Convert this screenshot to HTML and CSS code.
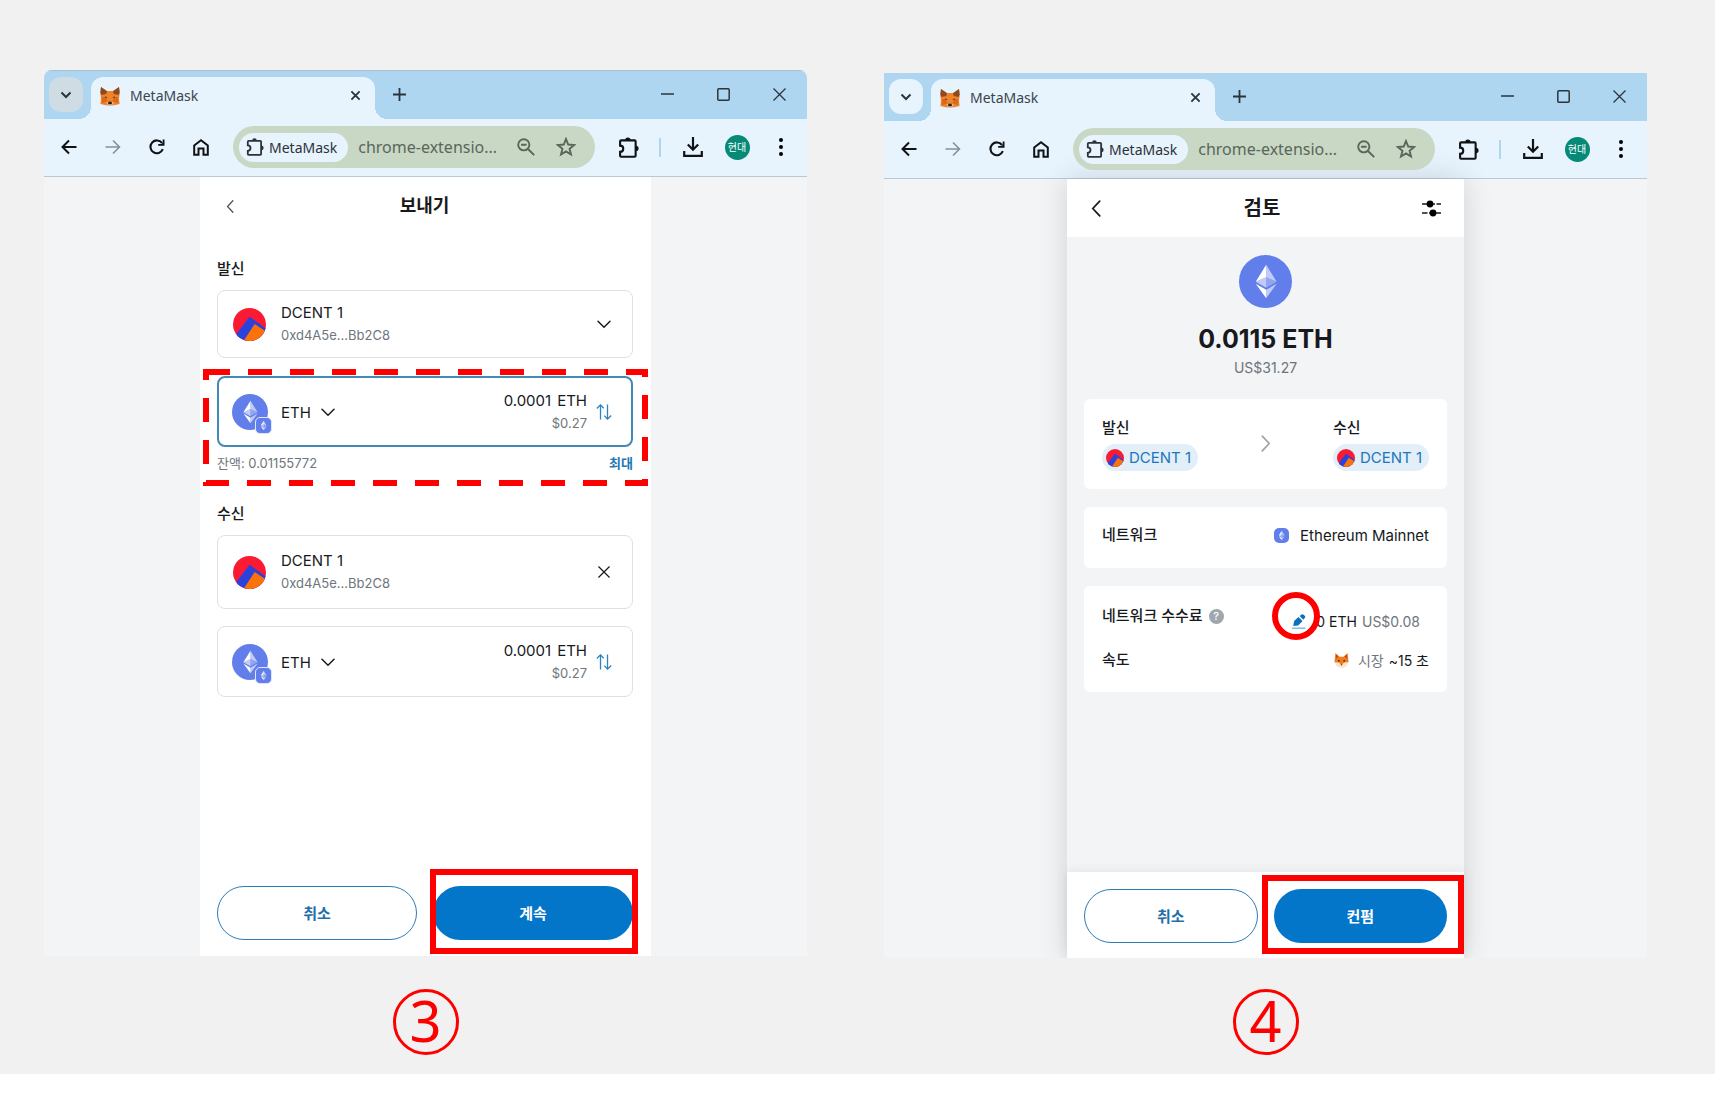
FILE: index.html
```html
<!DOCTYPE html>
<html lang="ko">
<head>
<meta charset="utf-8">
<meta name="viewport" content="width=device-width, initial-scale=1">
<title>MetaMask</title>
<link rel="stylesheet" href="styles.css">
</head>
<body>
<svg class="sprite" aria-hidden="true">
  <symbol id="fox" viewBox="0 0 20 20">
    <path fill="#f0832a" d="M1 1l6 4h6l6-4 .8 6-.8 5.500.6 5.500-5.400 1.200L10.800 19.500H9.200L5.800 19.200.4 18l.6-5.500L.2 7z"/>
    <path fill="#8a4a24" d="M1 1l6 4.200L6.200 8 1.600 9 .4 6.500zM19 1l-6 4.200.8 2.800 4.600 1 1.200-2.500z"/>
    <path fill="#d96a1c" d="M2 11l4 .3 1.500 4L2 17.200zM18 11l-4 .3-1.500 4 5.500 1.900z"/>
    <path fill="#5b3a2c" d="M5 10.300l2.800 1.300-2.500.5zM15 10.300l-2.800 1.300 2.500.5z"/>
    <path fill="#d8c9bd" d="M6.500 16l2 .5h3l2-.5-1.500 3.300H8z"/>
    <path fill="#2a2320" d="M8.400 15.800h3.200l.4 2.400H8z"/>
  </symbol>
  <symbol id="foxface" viewBox="0 0 16 16">
    <path fill="#f47c20" d="M1.500 0L6 4h4L14.500 0l1 9.500L8 15.500.5 9.500z"/>
    <path fill="#a34b1d" d="M2.200 1.500l2.300 2.300L2.400 6zM13.800 1.500l-2.300 2.300L13.600 6z"/>
    <path fill="#fbe3c8" d="M.4 9.800l4.600.3L8 12.500l3-2.400 4.600-.3-2.600 4.500L8 16l-5-1.700z"/>
    <path fill="#3a2a22" d="M4.300 7.500h1.600V9H4.300zM10.100 7.500h1.600V9h-1.600zM7 12h2l-1 1.500z"/>
  </symbol>
  <symbol id="down" viewBox="0 0 12 12"><path d="M1.500 3.500L6 8l4.500-4.500" fill="none" stroke="currentColor" stroke-width="2"/></symbol>
  <symbol id="x" viewBox="0 0 12 12"><path d="M1.500 1.500l9 9M10.500 1.500l-9 9" fill="none" stroke="currentColor" stroke-width="2"/></symbol>
  <symbol id="thinx" viewBox="0 0 13 13"><path d="M.5.5l12 12M12.500.5l-12 12" fill="none" stroke="currentColor" stroke-width="1.300"/></symbol>
  <symbol id="plus" viewBox="0 0 13 13"><path d="M6.500 0v13M0 6.500h13" fill="none" stroke="currentColor" stroke-width="1.800"/></symbol>
  <symbol id="min" viewBox="0 0 13 13"><path d="M0 6h13" fill="none" stroke="currentColor" stroke-width="1.500"/></symbol>
  <symbol id="max" viewBox="0 0 13 13"><rect x=".8" y=".8" width="11.400" height="11.400" rx="1" fill="none" stroke="currentColor" stroke-width="1.500"/></symbol>
  <symbol id="back" viewBox="0 0 16 16"><path d="M15.500 8H2M8 1.500L1.500 8 8 14.500" fill="none" stroke="currentColor" stroke-width="2"/></symbol>
  <symbol id="forward" viewBox="0 0 16 16"><path d="M.5 8H14M8 1.500L14.500 8 8 14.500" fill="none" stroke="currentColor" stroke-width="1.600"/></symbol>
  <symbol id="reload" viewBox="0 0 16 16"><path d="M13.800 10.200A6.400 6.400 0 1 1 13 4" fill="none" stroke="currentColor" stroke-width="2.100"/><path d="M15.500.5v6.300H9.200V5h3.500l1-1.500v-3z" fill="currentColor"/></symbol>
  <symbol id="home" viewBox="0 0 16 17"><path d="M1.200 6.500L8 1.300l6.800 5.200v9.300h-4.300V9.500h-5v6.300H1.200z" fill="none" stroke="currentColor" stroke-width="2"/></symbol>
  <symbol id="puzzle" viewBox="0 0 20 20"><path d="M2 4.200q0-1 1-1h12.800q1 0 1 1v13.600q0 1-1 1H3q-1 0-1-1v-3.600c4 0 4-6 0-6z" fill="none" stroke="currentColor" stroke-width="2"/><path d="M6.800 3a2.600 2.600 0 0 1 5.200 0zM17 8.400a2.600 2.600 0 0 1 0 5.200z" fill="currentColor"/></symbol>
  <symbol id="zoomout" viewBox="0 0 18 18"><circle cx="6.800" cy="6.800" r="5.600" fill="none" stroke="currentColor" stroke-width="1.900"/><path d="M11 11l6.200 6.200M4 6.800h5.600" fill="none" stroke="currentColor" stroke-width="1.900"/></symbol>
  <symbol id="star" viewBox="0 0 18 18"><path d="M9 1.800l2 5 5.300.4-4.100 3.400 1.300 5.200L9 13l-4.500 2.800 1.300-5.200L1.700 7.200 7 6.800z" fill="none" stroke="currentColor" stroke-width="1.700"/></symbol>
  <symbol id="download" viewBox="0 0 20 20"><path d="M10 0v12M4.800 7.500L10 12.700l5.200-5.200M1.200 14v4.800h17.600V14" fill="none" stroke="currentColor" stroke-width="2.200"/></symbol>
  <symbol id="dots" viewBox="0 0 4 18"><circle cx="2" cy="2" r="2"/><circle cx="2" cy="9" r="2"/><circle cx="2" cy="16" r="2"/></symbol>
  <symbol id="chevl" viewBox="0 0 9 16"><path d="M8 1L1.500 8 8 15" fill="none" stroke="currentColor" stroke-width="1.600" stroke-linecap="round"/></symbol>
  <symbol id="chevr" viewBox="0 0 9 16"><path d="M1 1l6.500 7L1 15" fill="none" stroke="currentColor" stroke-width="1.600" stroke-linecap="round"/></symbol>
  <symbol id="chevd" viewBox="0 0 14 9"><path d="M1 1.200l6 6 6-6" fill="none" stroke="currentColor" stroke-width="1.500" stroke-linecap="round"/></symbol>
  <symbol id="swap" viewBox="0 0 16 16"><path d="M4.500 15.500V1M.8 4.500L4.500.9l3.200 3.400M11.500.5V15M8.300 11.600l3.200 3.500 3.700-3.600" fill="none" stroke="currentColor" stroke-width="1.300"/></symbol>
  <symbol id="tune" viewBox="0 0 19 17"><path d="M0 4h13M14.500 4H19M0 13h5.500M7 13h12" stroke="currentColor" stroke-width="1.300"/><circle cx="8" cy="4" r="3.400"/><circle cx="11" cy="13" r="3.400"/></symbol>
  <symbol id="pencil" viewBox="0 0 14 15"><path fill="currentColor" d="M1.300 12l.8-5L6.500 3l4 4-4.300 4.500zM7.700 2l1.800-1.400q1.200-.8 2.200.2l1 1q1 1.200 0 2.200L11.300 5.800z"/><path d="M0 14.200h13.500" stroke="#6cb1df" stroke-width="1.300"/></symbol>
  <symbol id="jazz" viewBox="0 0 32 32">
    <clipPath id="disc"><circle cx="16" cy="16" r="16"/></clipPath>
    <g clip-path="url(#disc)"><path fill="#fb1a33" d="M0 0h32v32H0z"/><path fill="#2a41dc" d="M16 8.500L3 25.500V34h20l10-9v-4.500z"/><path fill="#fa7209" d="M21 15.500L9.500 33H33v-9.500z"/></g>
  </symbol>
  <symbol id="diamond" viewBox="-3 -3 38 38">
    <g fill="#fff"><path fill-opacity=".6" d="M16.500 4v8.870l7.500 3.350z"/><path d="M16.500 4L9 16.220l7.500-3.350z"/><path fill-opacity=".6" d="M16.500 21.970V28L24 17.620z"/><path d="M16.500 28v-6.030L9 17.620z"/><path fill-opacity=".3" d="M16.500 20.570l7.500-4.350-7.500-3.350z"/><path fill-opacity=".6" d="M9 16.220l7.500 4.350v-7.700z"/></g>
  </symbol>
</svg>

<main class="stage">
  <figure class="step">
    <section class="window window-send">
      <div class="tabstrip">
        <button class="tabsearch" aria-label="탭 검색"><svg width="12" height="12"><use href="#down"/></svg></button>
        <div class="tab">
          <svg width="20" height="20"><use href="#fox"/></svg>
          <span class="tabname">MetaMask</span>
          <button class="tabclose" aria-label="탭 닫기"><svg width="11" height="11"><use href="#x"/></svg></button>
        </div>
        <button class="newtab" aria-label="새 탭"><svg width="13" height="13"><use href="#plus"/></svg></button>
        <div class="controls">
          <button aria-label="최소화"><svg width="13" height="13"><use href="#min"/></svg></button>
          <button aria-label="최대화"><svg width="13" height="13"><use href="#max"/></svg></button>
          <button aria-label="닫기"><svg width="13" height="13"><use href="#thinx"/></svg></button>
        </div>
      </div>
      <div class="toolbar">
        <button class="tool" aria-label="뒤로"><svg width="16" height="16"><use href="#back"/></svg></button>
        <button class="tool dim" aria-label="앞으로"><svg width="16" height="16"><use href="#forward"/></svg></button>
        <button class="tool" aria-label="새로고침"><svg width="16" height="16"><use href="#reload"/></svg></button>
        <button class="tool" aria-label="홈"><svg width="16" height="17"><use href="#home"/></svg></button>
        <div class="omnibox">
          <button class="chip"><svg width="18" height="18"><use href="#puzzle"/></svg>MetaMask</button>
          <input class="url" type="text" aria-label="주소" value="chrome-extensio...">
          <button aria-label="축소"><svg width="18" height="18"><use href="#zoomout"/></svg></button>
          <button aria-label="북마크"><svg width="20" height="20"><use href="#star"/></svg></button>
        </div>
        <button class="tool" aria-label="확장 프로그램"><svg width="21" height="21"><use href="#puzzle"/></svg></button>
        <span class="divider"></span>
        <button class="tool" aria-label="다운로드"><svg width="20" height="20"><use href="#download"/></svg></button>
        <button class="tool" aria-label="프로필"><span class="profile">현대</span></button>
        <button class="tool" aria-label="메뉴"><svg width="4" height="18"><use href="#dots"/></svg></button>
      </div>
      <div class="viewport">
        <div class="wallet send">
          <header class="head">
            <button class="headbtn grey" aria-label="뒤로"><svg width="8" height="13"><use href="#chevl"/></svg></button>
            <h1>보내기</h1>
            <span class="headbtn"></span>
          </header>
          <div class="form">
            <h2>발신</h2>
            <button class="field account">
              <svg width="33" height="33"><use href="#jazz"/></svg>
              <span class="lines"><span class="name">DCENT 1</span><span class="sub">0xd4A5e...Bb2C8</span></span>
              <svg class="end" width="14" height="9"><use href="#chevd"/></svg>
            </button>
            <div class="marked">
              <div class="field token active">
                <span class="coin"><svg width="36" height="36"><use href="#diamond"/></svg><span class="coinbadge"><svg width="15" height="15"><use href="#diamond"/></svg></span></span>
                <button class="pick">ETH<svg width="14" height="9"><use href="#chevd"/></svg></button>
                <span class="lines amount"><label class="name"><input type="text" aria-label="보내는 금액" value="0.0001"> ETH</label><span class="sub">$0.27</span></span>
                <button class="end swap" aria-label="단위 전환"><svg width="16" height="16"><use href="#swap"/></svg></button>
              </div>
              <div class="balance"><span>잔액: 0.01155772</span><button>최대</button></div>
              <svg class="dashes" aria-hidden="true"><rect class="dashrect"/></svg>
            </div>
            <h2>수신</h2>
            <div class="field account tall">
              <svg width="33" height="33"><use href="#jazz"/></svg>
              <span class="lines"><span class="name">DCENT 1</span><span class="sub">0xd4A5e...Bb2C8</span></span>
              <button class="end" aria-label="지우기"><svg width="12" height="12"><use href="#thinx"/></svg></button>
            </div>
            <div class="field token">
              <span class="coin"><svg width="36" height="36"><use href="#diamond"/></svg><span class="coinbadge"><svg width="15" height="15"><use href="#diamond"/></svg></span></span>
              <button class="pick">ETH<svg width="14" height="9"><use href="#chevd"/></svg></button>
              <span class="lines amount"><label class="name"><input type="text" aria-label="받는 금액" value="0.0001"> ETH</label><span class="sub">$0.27</span></span>
              <button class="end swap" aria-label="단위 전환"><svg width="16" height="16"><use href="#swap"/></svg></button>
            </div>
          </div>
          <footer class="actions">
            <button class="btn outline">취소</button>
            <div class="framed"><button class="btn solid">계속</button></div>
          </footer>
        </div>
      </div>
    </section>
    <figcaption>3</figcaption>
  </figure>

  <figure class="step">
    <section class="window window-review">
      <div class="tabstrip">
        <button class="tabsearch" aria-label="탭 검색"><svg width="12" height="12"><use href="#down"/></svg></button>
        <div class="tab">
          <svg width="20" height="20"><use href="#fox"/></svg>
          <span class="tabname">MetaMask</span>
          <button class="tabclose" aria-label="탭 닫기"><svg width="11" height="11"><use href="#x"/></svg></button>
        </div>
        <button class="newtab" aria-label="새 탭"><svg width="13" height="13"><use href="#plus"/></svg></button>
        <div class="controls">
          <button aria-label="최소화"><svg width="13" height="13"><use href="#min"/></svg></button>
          <button aria-label="최대화"><svg width="13" height="13"><use href="#max"/></svg></button>
          <button aria-label="닫기"><svg width="13" height="13"><use href="#thinx"/></svg></button>
        </div>
      </div>
      <div class="toolbar">
        <button class="tool" aria-label="뒤로"><svg width="16" height="16"><use href="#back"/></svg></button>
        <button class="tool dim" aria-label="앞으로"><svg width="16" height="16"><use href="#forward"/></svg></button>
        <button class="tool" aria-label="새로고침"><svg width="16" height="16"><use href="#reload"/></svg></button>
        <button class="tool" aria-label="홈"><svg width="16" height="17"><use href="#home"/></svg></button>
        <div class="omnibox">
          <button class="chip"><svg width="18" height="18"><use href="#puzzle"/></svg>MetaMask</button>
          <input class="url" type="text" aria-label="주소" value="chrome-extensio...">
          <button aria-label="축소"><svg width="18" height="18"><use href="#zoomout"/></svg></button>
          <button aria-label="북마크"><svg width="20" height="20"><use href="#star"/></svg></button>
        </div>
        <button class="tool" aria-label="확장 프로그램"><svg width="21" height="21"><use href="#puzzle"/></svg></button>
        <span class="divider"></span>
        <button class="tool" aria-label="다운로드"><svg width="20" height="20"><use href="#download"/></svg></button>
        <button class="tool" aria-label="프로필"><span class="profile">현대</span></button>
        <button class="tool" aria-label="메뉴"><svg width="4" height="18"><use href="#dots"/></svg></button>
      </div>
      <div class="viewport">
        <div class="wallet review">
          <header class="head">
            <button class="headbtn" aria-label="뒤로"><svg width="10" height="17"><use href="#chevl"/></svg></button>
            <h1>검토</h1>
            <button class="headbtn settings" aria-label="고급 설정"><svg width="19" height="17"><use href="#tune"/></svg></button>
          </header>
          <div class="summary">
            <span class="bigcoin"><svg width="53" height="53"><use href="#diamond"/></svg></span>
            <strong>0.0115 ETH</strong>
            <span class="fiat">US$31.27</span>
          </div>
          <div class="cards">
            <div class="card parties">
              <div><h2>발신</h2><button class="pill"><svg width="18" height="18"><use href="#jazz"/></svg>DCENT 1</button></div>
              <svg class="arrow" width="10" height="17"><use href="#chevr"/></svg>
              <div><h2>수신</h2><button class="pill"><svg width="18" height="18"><use href="#jazz"/></svg>DCENT 1</button></div>
            </div>
            <div class="card network">
              <h2>네트워크</h2>
              <span class="value"><span class="netcoin"><svg width="15" height="15"><use href="#diamond"/></svg></span>Ethereum Mainnet</span>
            </div>
            <div class="card fees">
              <div class="row">
                <h2>네트워크 수수료 <span class="help">?</span></h2>
                <span class="value fee">
                  <button class="edit" aria-label="수수료 수정"><svg width="14" height="15"><use href="#pencil"/></svg></button>
                  <span>0 ETH</span><span class="muted">US$0.08</span>
                </span>
              </div>
              <div class="row">
                <h2>속도</h2>
                <span class="value speed"><svg width="15" height="15"><use href="#foxface"/></svg><span class="muted">시장</span><span>~15 초</span></span>
              </div>
            </div>
          </div>
          <footer class="actions">
            <button class="btn outline">취소</button>
            <div class="framed"><button class="btn solid">컨펌</button></div>
          </footer>
        </div>
      </div>
    </section>
    <figcaption>4</figcaption>
  </figure>
</main>
</body>
</html>
```

FILE: styles.css
```css
*, *::before, *::after { box-sizing: border-box; }

body {
  margin: 0;
  background: #fff;
  color: #17191c;
  font-family: Inter, "Noto Sans CJK KR", sans-serif;
  font-size: 15px;
}

button, input {
  margin: 0;
  padding: 0;
  border: 0;
  background: none;
  color: inherit;
  font: inherit;
}

button { display: flex; align-items: center; justify-content: center; }
svg { display: block; flex: none; }
h1, h2, figure { margin: 0; }
.sprite { position: absolute; width: 0; height: 0; }

.stage {
  display: grid;
  grid-template-columns: 1fr 1fr;
  gap: 77px;
  padding: 70px 68px 19px 44px;
  background: #f1f1f1;
}

.step { display: flex; flex-direction: column; min-width: 0; }

figcaption {
  width: 66px;
  height: 66px;
  margin: auto auto 0;
  border: 3px solid #f00;
  border-radius: 50%;
  color: #f00;
  font-family: "Noto Sans", sans-serif;
  font-size: 56px;
  line-height: 56px;
  text-align: center;
}

/* Browser window */
.window { overflow: hidden; background: #f2f4f6; }
.window-send { border-radius: 8px 8px 0 0; }
.window-review { margin: 3px 0 31px; }

.tabstrip {
  display: flex;
  padding: 6px 0 0 5px;
  background: #afd6f0;
  color: #2b343b;
  font-family: "Noto Sans", sans-serif;
}
.window-send .tabstrip { border-top: 1px solid #a9bfcc; }

.tabsearch { width: 34px; height: 35px; border-radius: 12px; background: #cfdce4; }
.window-review .tabsearch { background: #e7f3fd; }

.tab {
  position: relative;
  display: flex;
  align-items: center;
  width: 284px;
  height: 42px;
  margin-left: 8px;
  padding: 0 14px 5px 9px;
  border-radius: 12px 12px 0 0;
  background: #e7f3fd;
}
.tab::before, .tab::after {
  content: "";
  position: absolute;
  bottom: 0;
  width: 12px;
  height: 12px;
}
.tab::before { left: -12px; background: radial-gradient(circle at 0 0, transparent 12px, #e7f3fd 12px); }
.tab::after { right: -12px; background: radial-gradient(circle at 100% 0, transparent 12px, #e7f3fd 12px); }
.tabname { flex: 1; margin-left: 10px; font-size: 14px; color: #3c454c; }
.newtab { width: 34px; height: 35px; margin-left: 7px; }
.controls { display: flex; margin-left: auto; }
.controls button { width: 56px; height: 35px; }

.toolbar {
  display: flex;
  align-items: center;
  height: 58px;
  padding: 0 4px 1px 3px;
  border-bottom: 1px solid #b9c8d2;
  background: #e7f3fd;
  color: #101214;
  font-family: "Noto Sans", "Noto Sans CJK KR", sans-serif;
}
.tool { width: 44px; height: 44px; }
.dim { color: #84919b; }
.omnibox {
  display: flex;
  flex: 1;
  align-items: center;
  min-width: 0;
  height: 42px;
  margin: 0 11px 0 10px;
  padding: 0 9px 0 6px;
  border-radius: 21px;
  background: #c8d8c4;
  color: #5b665b;
}
.omnibox button { width: 40px; height: 40px; }
.omnibox .chip {
  gap: 5px;
  width: auto;
  height: 29px;
  padding: 0 11px 0 7px;
  border-radius: 15px;
  background: #e7f3fd;
  color: #2b3238;
  font-size: 14px;
}
.url { flex: 1; min-width: 0; margin-left: 10px; font-size: 16px; }
.divider { width: 2px; height: 19px; margin: 0 10px 0 9px; background: #afd6f0; }
.profile {
  width: 25px;
  border-radius: 50%;
  background: #068a78;
  color: #fff;
  font-size: 10px;
  line-height: 25px;
}

/* Wallet page */
.viewport { padding: 0 16px; }
.wallet {
  display: flex;
  flex-direction: column;
  min-height: calc(100vh - 325px);
  margin: 0 auto;
}
.send { max-width: 451px; background: #fff; }
.review {
  max-width: 397px;
  background: #f2f4f6;
  box-shadow: 0 0 28px rgba(0, 0, 0, .14);
}

.head {
  display: flex;
  align-items: center;
  justify-content: space-between;
  height: 58px;
  padding: 0 18px 0 16px;
  background: #fff;
}
.head h1 { font-size: 18px; line-height: 24px; }
.review h1 { font-size: 20px; }
.headbtn { width: 28px; height: 28px; }
.review .headbtn { width: 25px; }
.review .settings { width: 30px; }
.grey { color: #4d5156; }

h2 { font-size: 15px; font-weight: 500; line-height: 24px; }

.form { display: flex; flex-direction: column; padding: 22px 18px 22px 17px; }
.form h2 { margin-bottom: 9px; }

.field {
  display: flex;
  align-items: center;
  width: 100%;
  padding: 10px 14px 10px 15px;
  border: 1px solid #dfe1e5;
  border-radius: 8px;
  background: #fff;
  text-align: left;
}
.field.tall { padding: 13px 14px 13px 15px; }
.field.token { margin-top: 17px; padding: 12px 14px 11px; }
.field.active { margin-top: 0; padding: 11px 13px 10px; border: 2px solid #4488b4; }
.lines { display: flex; flex-direction: column; }
.account .lines { margin-left: 15px; }
.name, .sub { line-height: 23px; }
.sub { color: #6e757d; font-size: 13px; }
.end { width: 28px; margin-left: auto; }

.coin, .bigcoin, .netcoin { display: block; background: #627eea; }
.coin { position: relative; border-radius: 50%; }
.coinbadge {
  position: absolute;
  right: -4px;
  bottom: -4px;
  border: 1px solid #dfe6fb;
  border-radius: 5px;
  background: #627eea;
}
.pick { gap: 10px; margin-left: 13px; }
.amount { margin-left: auto; text-align: right; }
.amount label { display: flex; justify-content: flex-end; gap: 6px; }
.amount input { width: 80px; text-align: right; }
.swap { margin-left: 3px; color: #2c83bf; }

.marked { position: relative; margin: 18px 0 27px; }
.balance {
  display: flex;
  justify-content: space-between;
  margin-top: 4px;
  color: #6e757d;
  font-size: 13px;
  line-height: 24px;
}
.balance button { color: #1f77b4; font-weight: 700; }
.dashes {
  position: absolute;
  top: -7px;
  left: -14px;
  width: calc(100% + 29px);
  height: 117px;
  pointer-events: none;
}
.dashrect {
  x: 3px;
  y: 3px;
  width: calc(100% - 6px);
  height: 111px;
  fill: none;
  stroke: #f00;
  stroke-width: 6px;
  stroke-dasharray: 24 18;
}

.actions {
  display: grid;
  grid-template-columns: 1fr 1fr;
  gap: 16px;
  margin-top: auto;
  padding: 16px 18px 16px 17px;
  background: #fff;
}
.review .actions { padding: 17px 17px 15px; box-shadow: 0 0 12px rgba(0, 0, 0, .08); }
.btn { width: 100%; height: 54px; padding-bottom: 2px; border-radius: 27px; font-weight: 700; }
.outline { border: 1px solid #2c7cb5; color: #1f6fa8; }
.solid { background: #0376c9; color: #fff; }
.framed { position: relative; }
.framed::after {
  content: "";
  position: absolute;
  inset: -17px -5px -14px -3px;
  border: 6px solid #f00;
  pointer-events: none;
}
.review .framed::after { inset: -14px -17px -11px -12px; }

/* Review page */
.summary {
  display: flex;
  flex-direction: column;
  align-items: center;
  padding-top: 18px;
}
.bigcoin { border-radius: 50%; }
.summary strong { margin-top: 13px; font-size: 25px; line-height: 36px; }
.fiat { color: #6e757d; font-size: 14px; line-height: 22px; }

.cards { display: flex; flex-direction: column; gap: 18px; padding: 20px 17px; }
.card { padding: 17px 18px; border-radius: 6px; background: #fff; }
.parties, .network, .row, .value { display: flex; align-items: center; justify-content: space-between; }
.parties { padding-bottom: 18px; }
.parties h2 { margin-bottom: 4px; }
.network { padding: 16px 18px 21px; }
.pill {
  gap: 5px;
  height: 27px;
  padding: 0 7px 0 4px;
  border-radius: 14px;
  background: #e2eff8;
  color: #1c76bb;
}
.arrow { color: #9fa3a8; }
.netcoin { margin-right: 6px; border-radius: 5px; }
.fees h2 { display: flex; align-items: center; gap: 6px; }
.help {
  width: 15px;
  border-radius: 50%;
  background: #9fa6ae;
  color: #fff;
  font-size: 11px;
  line-height: 15px;
  text-align: center;
}
.fees { padding: 18px 18px 20px; }
.row + .row { margin-top: 20px; }
.muted { color: #6e757d; }
.value { gap: 5px; }
.fee { margin-bottom: -5px; padding: 5px 9px 0 0; font-size: 14px; }
.edit { position: relative; width: 14px; margin-right: 5px; color: #0d70b8; }
.edit::after {
  content: "";
  position: absolute;
  top: -22px;
  left: -20px;
  width: 48px;
  height: 48px;
  border: 6px solid #f00;
  border-radius: 50%;
}
.speed { font-size: 14px; }
.speed svg { margin-right: 4px; }
```
